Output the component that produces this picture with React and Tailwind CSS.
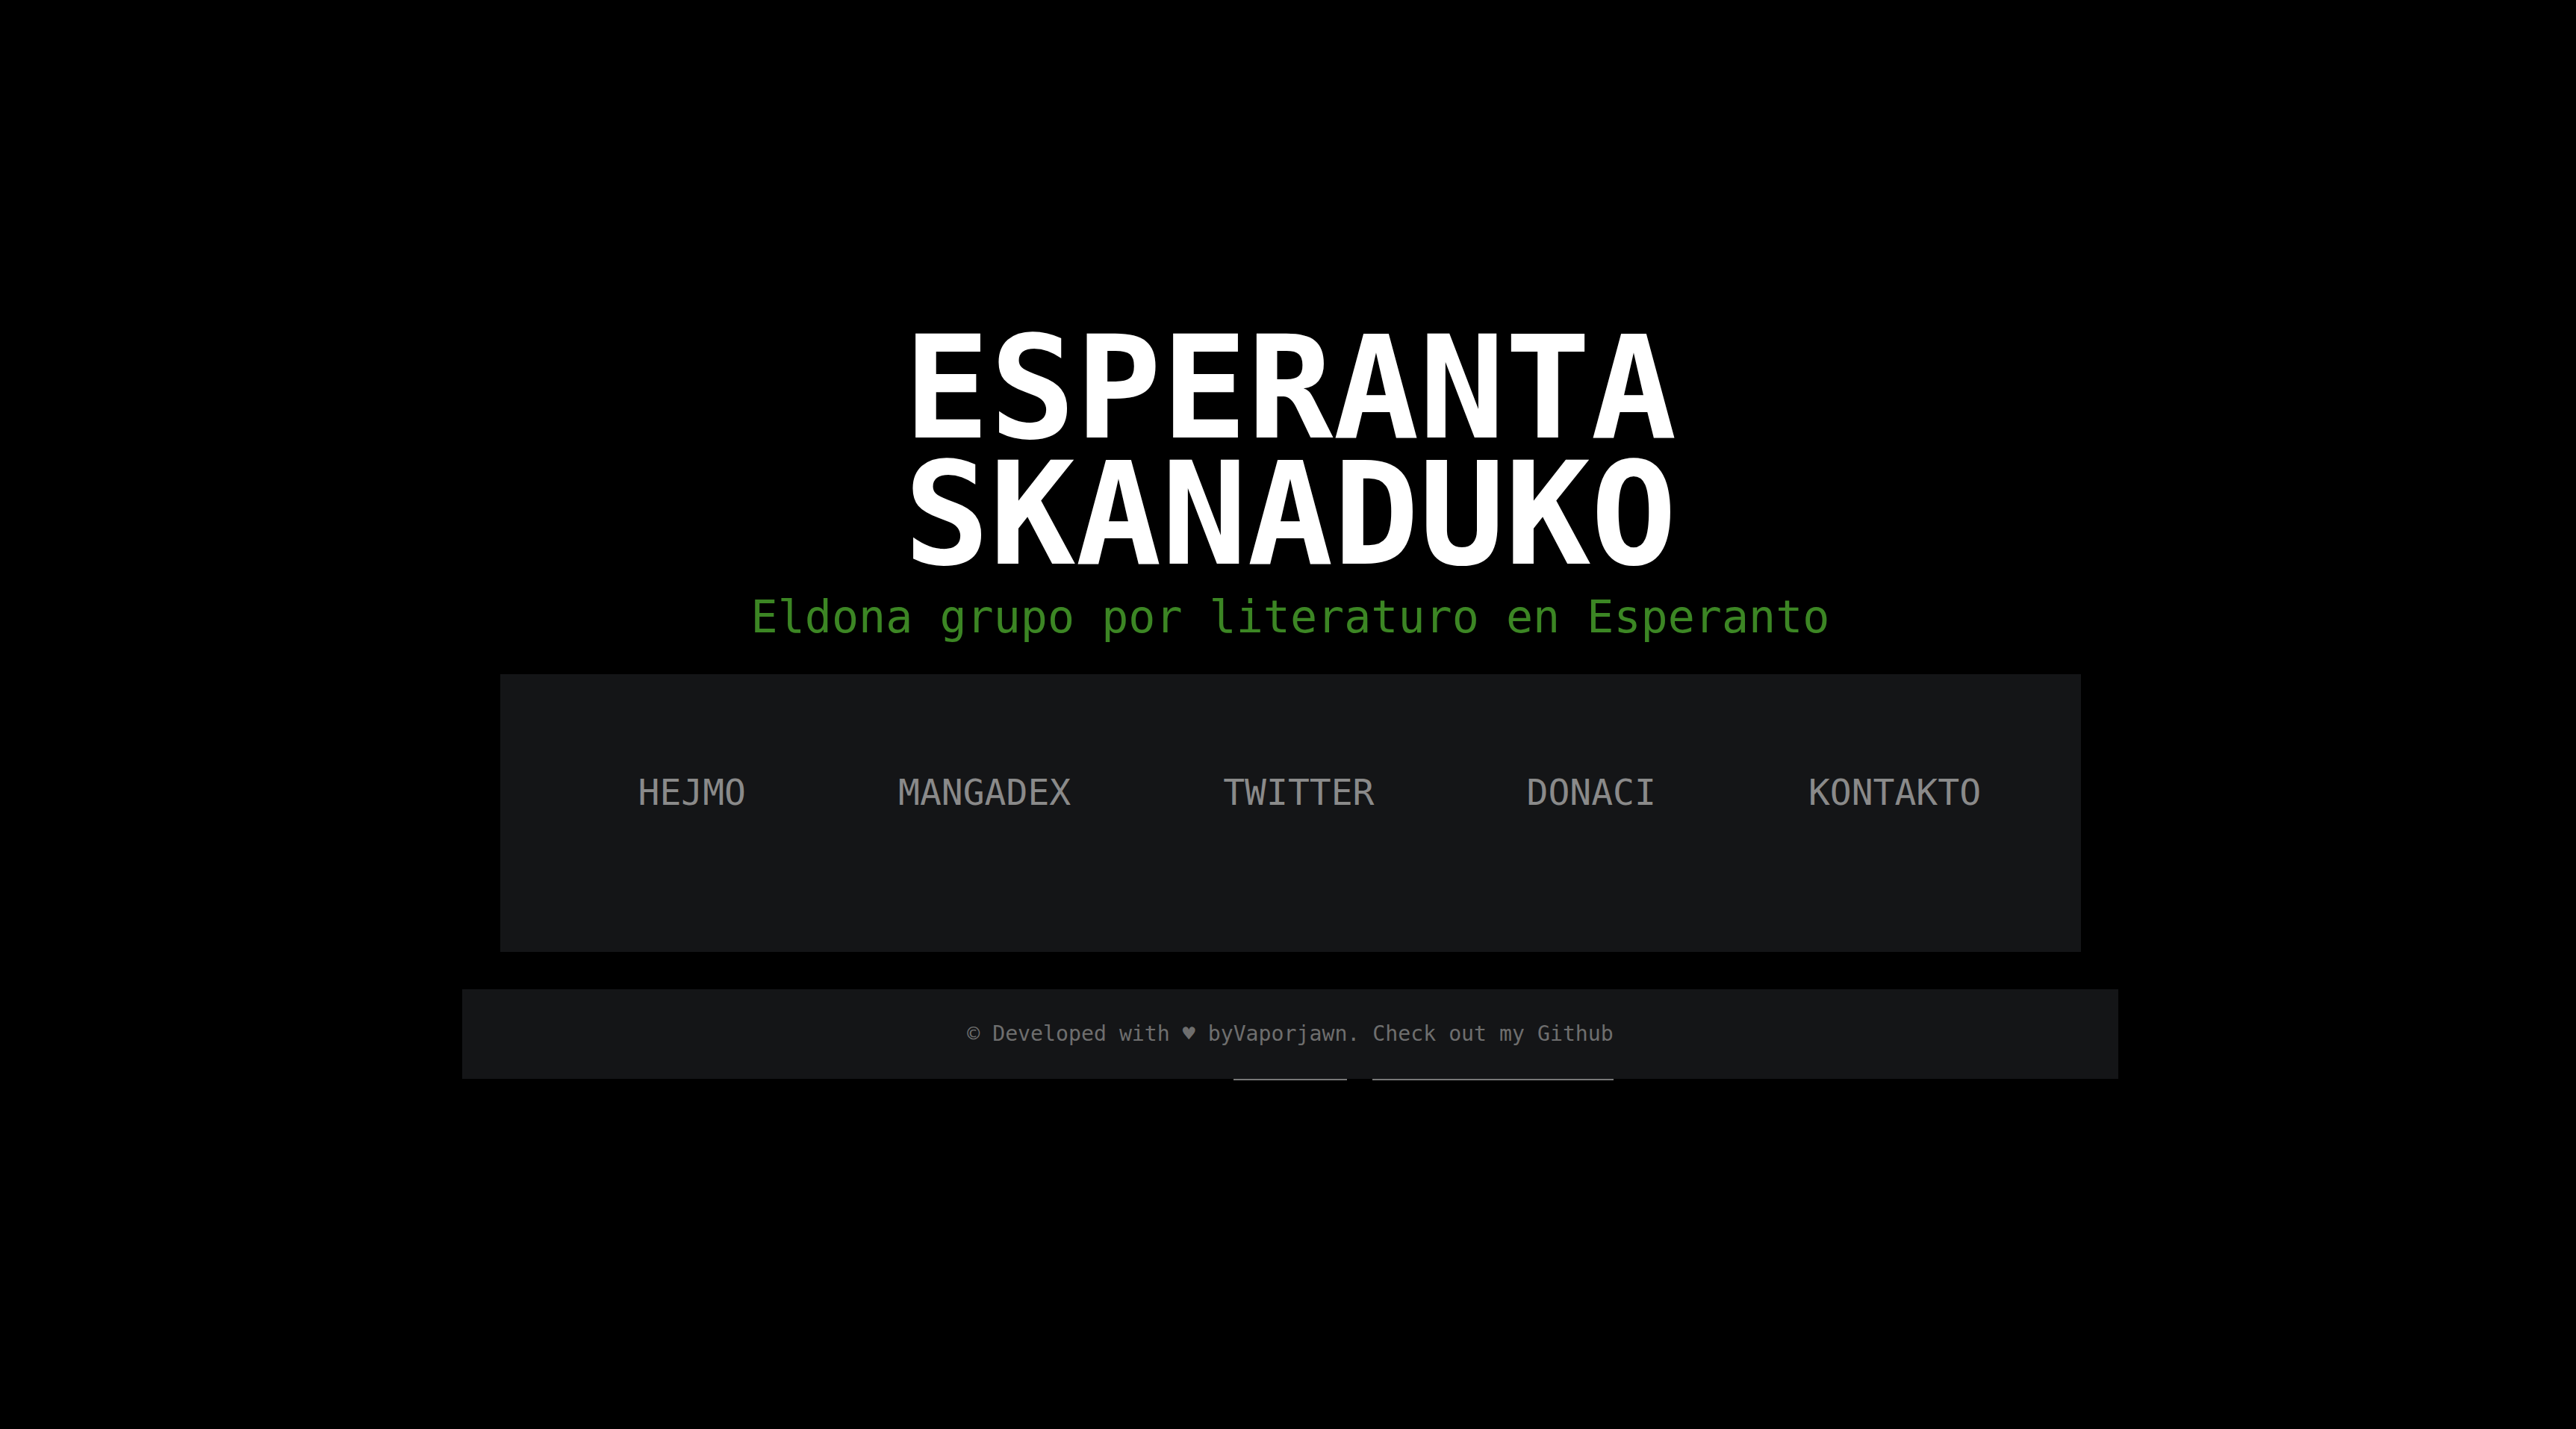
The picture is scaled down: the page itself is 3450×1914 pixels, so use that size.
import React from "react";

const links = ["HEJMO", "MANGADEX", "TWITTER", "DONACI", "KONTAKTO"];

function App() {
  return (
    <div className="min-h-screen bg-black flex flex-col items-center pl-[6px] font-['DejaVu_Sans_Mono','Liberation_Mono',monospace]">
      {/* Header */}
      <header className="flex flex-col items-center pt-[436px]">
        <h1 className="text-white font-bold text-[191px] leading-[169px] text-center">
          ESPERANTA
          <br />
          SKANADUKO
        </h1>
        <p className="mt-[17px] text-[60px] leading-[70px] text-[#3c8624]">
          Eldona grupo por literaturo en Esperanto
        </p>
      </header>

      {/* Nav */}
      <nav className="mt-[42px] w-[2117px] bg-[#141517] pt-[130px] pb-[186px]">
        <ul className="flex gap-[204px] pl-[185px]">
          {links.map(link => (
            <li key={link} className="text-[48px] leading-[56px] text-[#8a8a8a]">
              {link}
            </li>
          ))}
        </ul>
      </nav>

      {/* Footer */}
      <footer className="mt-[50px] w-[2218px] bg-[#141517] py-[44px] text-center text-[28.2px] leading-[32px] text-[#6e6e6e]">
        © Developed with ♥ by<span className="border-b-2 border-[#777777] pb-[44px]">Vaporjawn</span>.{" "}
        <span className="border-b-2 border-[#777777] pb-[44px]">Check out my Github</span>
      </footer>
    </div>
  );
}

export default App;
